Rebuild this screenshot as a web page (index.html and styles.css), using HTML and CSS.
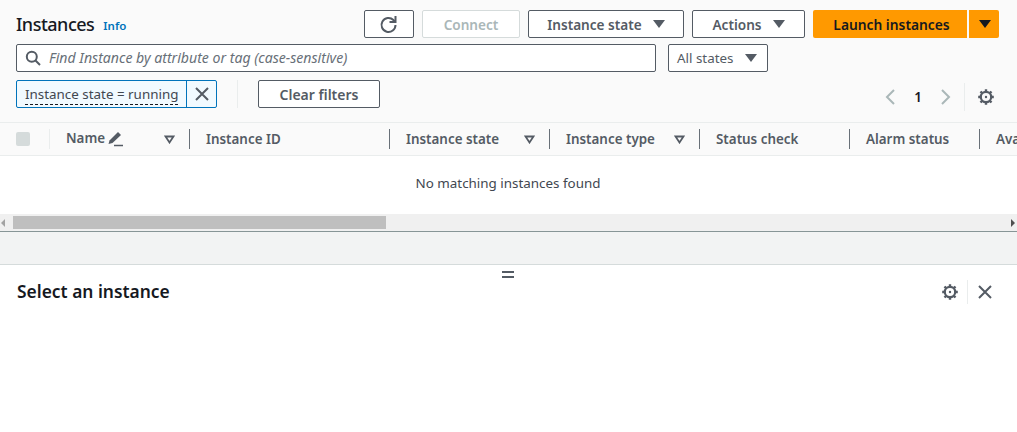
FILE: index.html
```html
<!DOCTYPE html>
<html lang="en">
<head>
<meta charset="utf-8">
<title>Instances</title>
<link rel="stylesheet" href="styles.css">
</head>
<body>
<section class="top">
  <div class="row row-title">
    <h1 class="title">Instances</h1>
    <a class="info">Info</a>
    <div class="actions">
      <button class="btn btn-refresh"><svg width="20" height="20" viewBox="0 0 20 20"><path d="M16.500 11a7 7 0 1 1-2.100-5l1.600 1.600" fill="none" stroke="#545b64" stroke-width="2"/><path d="M16.500 2v6h-6" fill="none" stroke="#545b64" stroke-width="2"/></svg></button>
      <button class="btn btn-disabled btn-connect">Connect</button>
      <button class="btn btn-state">Instance state<i class="caret"></i></button>
      <button class="btn btn-actions">Actions<i class="caret"></i></button>
      <div class="split">
        <button class="btn-launch">Launch instances</button>
        <button class="btn-launch-caret"><i class="caret caret-dark"></i></button>
      </div>
    </div>
  </div>
  <div class="row row-search">
    <div class="search">
      <svg width="16" height="16" viewBox="0 0 16 16"><circle cx="6.800" cy="6.800" r="5" fill="none" stroke="#545b64" stroke-width="2"/><path d="M10.500 10.500l4.500 4.500" stroke="#545b64" stroke-width="2" fill="none"/></svg>
      <span class="placeholder">Find Instance by attribute or tag (case-sensitive)</span>
    </div>
    <button class="select">All states<i class="caret"></i></button>
  </div>
  <div class="row row-filter">
    <div class="token">
      <span class="token-label"><span class="token-text">Instance state = running</span></span>
      <button class="token-x"><svg width="14" height="14" viewBox="0 0 14 14"><path d="M1 1l12 12M13 1L1 13" stroke="#545b64" stroke-width="2" fill="none"/></svg></button>
    </div>
    <span class="vsep"></span>
    <button class="btn btn-clear">Clear filters</button>
    <div class="pager">
      <svg class="chev" width="12" height="16" viewBox="0 0 12 16"><path d="M10 1L3 8l7 7" fill="none" stroke="#aab7b8" stroke-width="2"/></svg>
      <span class="page">1</span>
      <svg class="chev" width="12" height="16" viewBox="0 0 12 16"><path d="M2 1l7 7-7 7" fill="none" stroke="#aab7b8" stroke-width="2"/></svg>
      <span class="pager-sep"></span>
      <svg width="16" height="16" viewBox="0 0 16 16"><circle cx="8" cy="8" r="5.200" fill="none" stroke="#545b64" stroke-width="2.200"/><path d="M8 .2v2M8 13.800v2M.2 8h2M13.800 8h2M2.500 2.500l1.400 1.400M12.100 12.100l1.400 1.400M13.500 2.500l-1.400 1.400M3.900 12.100l-1.400 1.400" stroke="#545b64" stroke-width="2.400" fill="none"/><circle cx="8" cy="8" r="1.200" fill="#545b64"/></svg>
    </div>
  </div>
</section>
<div class="thead">
  <div class="th th-check"><span class="check"></span></div>
  <div class="th th-name"><span class="th-label name-label">Name</span><svg class="pen" width="16" height="16" viewBox="0 0 16 16"><path d="M.5 13L1.500 9.500 10 1l3 3-8.500 8z" fill="#545b64"/><path d="M6 14.500h9" stroke="#545b64" stroke-width="1.500"/></svg><svg class="sort" width="11" height="9" viewBox="0 0 11 9"><path d="M1.500 1.500h8L5.500 7.500z" fill="none" stroke="#545b64" stroke-width="1.800"/></svg></div>
  <div class="th th-id"><span class="th-label">Instance ID</span></div>
  <div class="th th-state"><span class="th-label">Instance state</span><svg class="sort" width="11" height="9" viewBox="0 0 11 9"><path d="M1.500 1.500h8L5.500 7.500z" fill="none" stroke="#545b64" stroke-width="1.800"/></svg></div>
  <div class="th th-type"><span class="th-label">Instance type</span><svg class="sort" width="11" height="9" viewBox="0 0 11 9"><path d="M1.500 1.500h8L5.500 7.500z" fill="none" stroke="#545b64" stroke-width="1.800"/></svg></div>
  <div class="th th-check2"><span class="th-label">Status check</span></div>
  <div class="th th-alarm"><span class="th-label">Alarm status</span></div>
  <div class="th th-az"><span class="th-label">Ava</span></div>
</div>
<div class="empty">No matching instances found</div>
<div class="scrollbar">
  <span class="arrow arrow-left"></span>
  <span class="thumb"></span>
  <span class="arrow arrow-right"></span>
</div>
<div class="gutter"></div>
<section class="detail">
  <div class="handle"></div>
  <div class="detail-head">
    <h2 class="detail-title">Select an instance</h2>
    <div class="detail-tools">
      <svg width="16" height="16" viewBox="0 0 16 16"><circle cx="8" cy="8" r="5.200" fill="none" stroke="#545b64" stroke-width="2.200"/><path d="M8 .2v2M8 13.800v2M.2 8h2M13.800 8h2M2.500 2.500l1.400 1.400M12.100 12.100l1.400 1.400M13.500 2.500l-1.400 1.400M3.900 12.100l-1.400 1.400" stroke="#545b64" stroke-width="2.400" fill="none"/><circle cx="8" cy="8" r="1.200" fill="#545b64"/></svg>
      <span class="tools-sep"></span>
      <svg width="14" height="14" viewBox="0 0 14 14"><path d="M1 1l12 12M13 1L1 13" stroke="#545b64" stroke-width="2" fill="none"/></svg>
    </div>
  </div>
</section>
</body>
</html>
```
FILE: styles.css
```css
* { box-sizing: border-box; }
html, body { margin: 0; height: 100%; }
body {
  width: 1017px;
  height: 432px;
  overflow: hidden;
  background: #fff;
  font-family: "Noto Sans", sans-serif;
  font-size: 13.4px;
  color: #16191f;
}
button { font-family: inherit; cursor: pointer; padding: 0; margin: 0; }

.top {
  background: #fafafa;
  height: 122px;
  padding: 10px 18px 0 16px;
  display: flex;
  flex-direction: column;
}
.row { display: flex; align-items: center; }
.row-title { height: 28px; }
.row-search { height: 28px; margin-top: 6px; }
.row-filter { height: 28px; margin-top: 8px; }

.title { margin: 0; font-size: 18px; font-weight: 500; letter-spacing: -0.5px; line-height: 28px; color: #16191f; }
.info { margin-left: 9px; font-size: 11.5px; font-weight: 600; color: #0073bb; padding-top: 2px; }
.actions { margin-left: auto; display: flex; gap: 8px; }

.btn {
  height: 28px;
  background: #fff;
  border: 1px solid #545b64;
  border-radius: 2px;
  font-size: 13.6px;
  font-weight: 600;
  color: #545b64;
  display: flex;
  align-items: center;
  justify-content: center;
}
.btn-refresh { width: 50px; }
.btn-connect { width: 98px; }
.btn-disabled { border-color: #d5dbdb; color: #aab7b8; }
.btn-state { width: 156px; }
.btn-actions { width: 113px; }
.btn-clear { width: 122px; font-size: 14px; }

.caret {
  display: inline-block;
  width: 0;
  height: 0;
  margin-left: 11px;
  border-left: 6px solid transparent;
  border-right: 6px solid transparent;
  border-top: 8px solid #545b64;
}
.caret-dark { border-top-color: #16191f; margin-left: 1px; }

.split { display: flex; gap: 2px; }
.btn-launch, .btn-launch-caret {
  height: 28px;
  border: 0;
  background: #ff9900;
  font-size: 13.8px;
  font-weight: 600;
  color: #16191f;
}
.btn-launch { width: 154px; padding-left: 3px; border-radius: 2px 0 0 2px; }
.btn-launch-caret { width: 30px; border-radius: 0 2px 2px 0; display: flex; align-items: center; justify-content: center; }

.search {
  width: 640px;
  height: 28px;
  background: #fff;
  border: 1px solid #545b64;
  border-radius: 2px;
  display: flex;
  align-items: center;
  padding-left: 8px;
  gap: 8px;
}
.placeholder { font-size: 14.1px; font-style: italic; color: #687078; padding-bottom: 2px; }
.select {
  margin-left: 12px;
  width: 100px;
  height: 28px;
  background: #fff;
  border: 1px solid #545b64;
  border-radius: 2px;
  font-size: 13.4px;
  color: #545b64;
  display: flex;
  align-items: center;
  padding-left: 8px;
}

.token {
  width: 201px;
  height: 28px;
  display: flex;
  border: 1px solid #0073bb;
  border-radius: 2px;
  background: #f1faff;
}
.token-label { flex: 1; padding-left: 8px; line-height: 26px; border-right: 1px solid #0073bb; color: #414750; }
.token-text { border-bottom: 1px dashed #16191f; padding-bottom: 1px; }
.token-x { width: 29px; background: none; border: 0; display: flex; align-items: center; justify-content: center; }
.vsep { width: 1px; height: 28px; margin: 0 20px; background: #eaeded; }

.pager { margin-left: auto; display: flex; align-items: center; margin-top: 6px; margin-right: 5px; }
.chev { display: block; }
.page { width: 44px; text-align: center; font-weight: 600; }
.pager-sep { width: 1px; height: 28px; background: #eaeded; margin: 0 13px 0 12px; }

.thead {
  height: 34px;
  background: #fafafa;
  border-top: 1px solid #eaeded;
  border-bottom: 1px solid #eaeded;
  display: flex;
  overflow: hidden;
  padding: 6px 0;
}
.th {
  flex: none;
  height: 20px;
  display: flex;
  align-items: center;
  padding-left: 16px;
  border-right: 1px solid #687078;
}
.th-label { font-weight: 600; color: #545b64; white-space: nowrap; }
.th-check { width: 50px; padding-left: 16px; border-right-color: #eaeded; }
.check { width: 14px; height: 14px; background: #d5dbdb; border-radius: 2px; }
.th-name { width: 140px; padding-left: 16px; }
.name-label { margin-top: -2px; }
.pen { margin-left: 3px; }
.th-name .sort { margin-left: auto; margin-right: 14px; }
.th-id { width: 200px; }
.th-state { width: 160px; }
.th-state .sort, .th-type .sort { margin-left: auto; margin-right: 14px; }
.th-type { width: 150px; }
.th-check2 { width: 150px; }
.th-alarm { width: 130px; }
.th-az { width: 38px; border-right: 0; }

.empty {
  height: 58px;
  text-align: center;
  line-height: 55px;
  color: #414750;
  padding-right: 1px;
}
.scrollbar {
  height: 17px;
  background: #f0f0f0;
  display: flex;
  align-items: center;
  position: relative;
}
.thumb { width: 373px; height: 13px; margin-left: 8px; background: #bfbfbf; }
.arrow { width: 0; height: 0; border-top: 4px solid transparent; border-bottom: 4px solid transparent; }
.arrow-left { margin-left: 1px; border-right: 4px solid #a3a3a3; }
.arrow-right { margin-left: auto; margin-right: 2px; border-left: 4px solid #505050; }

.gutter {
  height: 34px;
  background: #f2f3f3;
  border-top: 1px solid #879596;
  border-bottom: 1px solid #d5dbdb;
}
.detail { position: relative; background: #fff; }
.handle {
  position: absolute;
  left: 502px;
  top: 6px;
  width: 12px;
  height: 7px;
  border-top: 2px solid #545b64;
  border-bottom: 2px solid #545b64;
}
.detail-head { display: flex; align-items: center; height: 54px; padding: 0 25px 0 17px; }
.detail-title { margin: 0 0 2px; font-size: 17.4px; font-weight: 600; color: #16191f; }
.detail-tools { margin-left: auto; display: flex; align-items: center; }
.tools-sep { width: 1px; height: 24px; background: #eaeded; margin: 0 10px 0 9px; }
```
